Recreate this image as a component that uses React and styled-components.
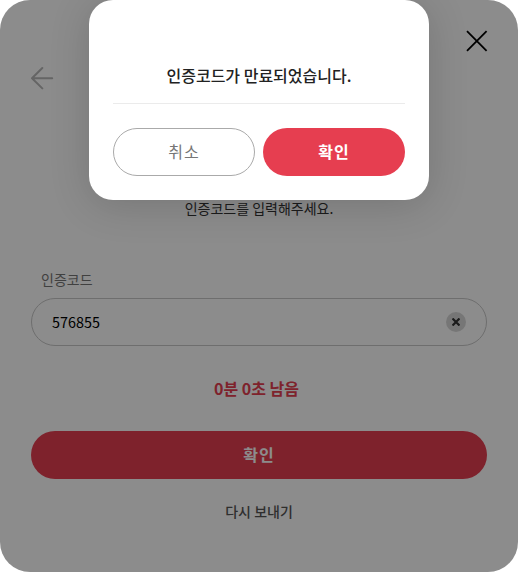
import styled, { createGlobalStyle } from "styled-components";

const GlobalStyle = createGlobalStyle`
  * {
    box-sizing: border-box;
  }

  body {
    margin: 0;
    background: #fff;
    font-family: "Noto Sans CJK KR", "Noto Sans", sans-serif;
  }

  button,
  input {
    font-family: inherit;
    margin: 0;
  }

  p {
    margin: 0;
  }
`;

const Card = styled.main`
  position: relative;
  display: flex;
  flex-direction: column;
  width: 518px;
  height: 572px;
  padding: 66px 31px 0;
  border-radius: 30px;
  background: #fff;
  overflow: hidden;
`;

const BackButton = styled.button`
  display: flex;
  align-self: flex-start;
  padding: 0;
  border: 0;
  background: none;
`;

const Description = styled.p`
  margin-top: 108px;
  color: #333;
  font-size: 14px;
  line-height: 20px;
  text-align: center;
`;

const Form = styled.form`
  display: flex;
  flex-direction: column;
  margin-top: 51px;
`;

const Label = styled.label`
  padding-left: 10px;
  color: #767676;
  font-size: 14px;
  line-height: 20px;
`;

const InputBox = styled.div`
  display: flex;
  align-items: center;
  height: 48px;
  margin-top: 9px;
  padding: 0 20px;
  border: 1px solid #c8c8c8;
  border-radius: 24px;
`;

const Input = styled.input`
  flex: 1;
  padding: 0 0 2px;
  border: 0;
  outline: none;
  background: none;
  color: #000;
  font-size: 14.4px;
`;

const ClearButton = styled.button`
  display: flex;
  align-items: center;
  justify-content: center;
  width: 20px;
  height: 20px;
  padding: 0;
  border: 0;
  border-radius: 50%;
  background: #d8d8d8;
`;

const Timer = styled.p`
  margin-top: 30px;
  padding-right: 5px;
  color: #e63e50;
  font-size: 16px;
  font-weight: 700;
  line-height: 24px;
  text-align: center;
`;

const Button = styled.button`
  width: ${(props) => (props.$wide ? "100%" : "142px")};
  height: 48px;
  margin-top: ${(props) => (props.$wide ? "31px" : 0)};
  padding: 0 0 2px;
  border: ${(props) => (props.$outline ? "1px solid #aaa" : "0")};
  border-radius: 24px;
  background: ${(props) => (props.$outline ? "#fff" : "#e63e50")};
  color: ${(props) => (props.$outline ? "#767676" : "#fff")};
  font-size: 16px;
  font-weight: ${(props) => (props.$outline ? 400 : 700)};
  letter-spacing: 1px;
`;

const ResendButton = styled.button`
  align-self: center;
  margin-top: 22px;
  padding: 0;
  border: 0;
  background: none;
  color: #555;
  font-size: 14px;
  font-weight: 500;
  line-height: 20px;
`;

const Overlay = styled.div`
  position: absolute;
  inset: 0;
  display: flex;
  justify-content: center;
  align-items: flex-start;
  background: rgba(0, 0, 0, 0.45);
`;

const Dialog = styled.div`
  width: 340px;
  height: 200px;
  padding: 63px 24px 24px;
  border-radius: 24px;
  background: #fff;
  box-shadow: 0 5px 40px rgba(0, 0, 0, 0.16);
`;

const Message = styled.p`
  height: 41px;
  border-bottom: 1px solid #ebebeb;
  color: #222;
  font-size: 16px;
  font-weight: 500;
  line-height: 24px;
  text-align: center;
`;

const Actions = styled.div`
  display: flex;
  gap: 8px;
  margin-top: 24px;
`;

const CloseButton = styled.button`
  position: absolute;
  top: 30px;
  right: 30px;
  display: flex;
  padding: 0;
  border: 0;
  background: none;
`;

function App() {
  return (
    <>
      <GlobalStyle />
      <Card>
        <BackButton aria-label="back">
          <svg width="23" height="24" viewBox="0 0 23 24" fill="none">
            <path
              d="M11.3 2L1 12.2l10.3 10.2M1 12.2h20.2"
              stroke="#b8b8b8"
              strokeWidth="2"
              strokeLinecap="round"
              strokeLinejoin="round"
            />
          </svg>
        </BackButton>
        <Description>인증코드를 입력해주세요.</Description>
        <Form>
          <Label htmlFor="code">인증코드</Label>
          <InputBox>
            <Input id="code" defaultValue="576855" />
            <ClearButton type="button" aria-label="clear">
              <svg width="8" height="8" viewBox="0 0 8 8">
                <path d="M.5 .5l7 7M7.5 .5l-7 7" stroke="#333" strokeWidth="2.2" />
              </svg>
            </ClearButton>
          </InputBox>
          <Timer>0분 0초 남음</Timer>
          <Button type="button" $wide>
            확인
          </Button>
          <ResendButton type="button">다시 보내기</ResendButton>
        </Form>
        <Overlay>
          <Dialog role="dialog">
            <Message>인증코드가 만료되었습니다.</Message>
            <Actions>
              <Button $outline>취소</Button>
              <Button>확인</Button>
            </Actions>
          </Dialog>
        </Overlay>
        <CloseButton aria-label="close">
          <svg width="22" height="22" viewBox="0 0 22 22">
            <path
              d="M1 1.2l19.6 19.6M20.6 1.2L1 20.8"
              stroke="#000"
              strokeWidth="1.8"
            />
          </svg>
        </CloseButton>
      </Card>
    </>
  );
}

export default App;
